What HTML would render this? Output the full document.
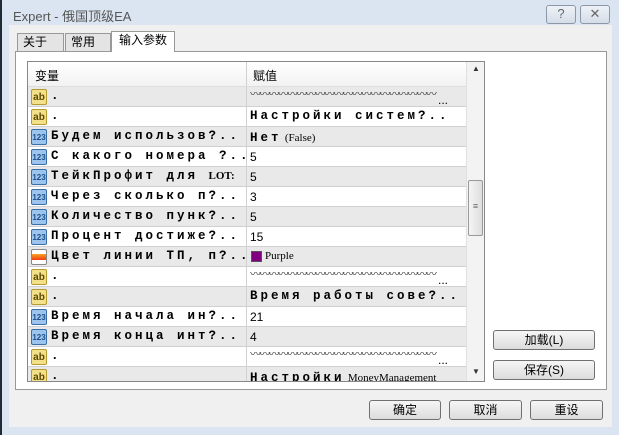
<!DOCTYPE html>
<html><head><meta charset="utf-8"><style>
*{margin:0;padding:0;box-sizing:border-box}
body{width:619px;height:435px;position:relative;overflow:hidden;background:#dbe5f1;font-family:"Liberation Sans","Noto Sans CJK SC",sans-serif;font-size:12px}
.abs{position:absolute}
.strip{left:0;top:0;width:2px;height:435px;background:#1e2a35}
.title{left:13px;top:6px;color:#555;font-size:13px}
.tb{top:5px;width:30px;height:19px;border:1px solid #8a98a8;border-radius:3px;background:linear-gradient(#eef2f7,#d5dde8);text-align:center;color:#666;font-size:13px;line-height:16px}
.client{left:9px;top:25px;width:603px;height:402px;background:#f0f0f0}
.tab{top:33px;height:18px;border:1px solid #999;border-bottom:none;background:#e4e4e4;padding-left:5px;font-size:12px;line-height:17px}
.panel{left:15px;top:51px;width:592px;height:339px;border:1px solid #999;background:#fff}
.table{left:27px;top:61px;width:458px;height:321px;border:1px solid #888;background:#fff;overflow:hidden}
.hdr{position:absolute;left:0;top:0;width:438px;height:25px;background:linear-gradient(#fff,#f2f2f2);border-bottom:1px solid #ddd}
.row{position:absolute;left:0;width:438px;height:20px;border-bottom:1px solid #d0d0d0}
.g{background:#e9e9e9}
.w{background:#fff}
.nm{position:absolute;left:23px;top:2px;font-family:"Liberation Mono",monospace;font-size:12.5px;font-weight:bold;letter-spacing:3px;white-space:nowrap}
.vl{position:absolute;left:222px;top:3px;font-size:12px;white-space:nowrap}
.vb{font-family:"Liberation Mono",monospace;font-size:12.5px;top:2px;font-weight:bold;letter-spacing:3px}
.sm{font-family:"Liberation Serif",serif;font-size:11px}
.sep{position:absolute;left:218px;top:0;width:1px;height:100%;background:#d0d0d0}
.ic{position:absolute;left:3px;top:2px;width:16px;height:16px;border-radius:2px;font-size:8px;font-weight:bold;text-align:center;line-height:15px}
.ab{background:#f3e08a;border:1px solid #b59b2e;color:#5a4a00;font-size:10px}
.n{background:#9cc4ec;border:1px solid #3b6fa8;color:#1d4f8a}
.c{background:linear-gradient(#fff 30%,#f7a020 30%,#f04010 70%,#fff 70%);border:1px solid #888}
.wave{position:absolute;left:222px;top:0;font-size:9px;color:#333;letter-spacing:-1.6px;transform:scaleX(1.25);transform-origin:left}
.scroll{position:absolute;left:438px;top:0;width:18px;height:319px;background:#f3f3f3;border-left:1px solid #e0e0e0}
.btn{height:20px;border:1px solid #707070;border-radius:3px;background:linear-gradient(#f6f6f6,#dcdcdc);text-align:center;font-size:12px;line-height:18px}
</style></head><body>
<div class="abs strip"></div>
<div class="abs title">Expert - 俄国顶级EA</div>
<div class="abs tb" style="left:546px">?</div>
<div class="abs tb" style="left:580px">✕</div>
<div class="abs client"></div>
<div class="abs tab" style="left:17px;width:47px">关于</div>
<div class="abs tab" style="left:65px;width:46px">常用</div>
<div class="abs panel"></div>
<div class="abs tab" style="left:111px;top:31px;width:64px;height:21px;background:#fff;z-index:2;padding-left:7px">输入参数</div>
<div class="abs table">
<div class="hdr"><span style="position:absolute;left:7px;top:5px">变量</span><div class="sep"></div><span style="position:absolute;left:225px;top:5px">赋值</span></div>
<div class="row g" style="top:25px"><div class="ic ab">ab</div><span class="nm">.</span><div class="sep"></div><span class="wave">〰〰〰〰〰〰〰〰〰〰〰〰〰〰〰〰〰〰〰〰</span><span class="vl" style="left:410px;top:6px">...</span></div>
<div class="row w" style="top:45px"><div class="ic ab">ab</div><span class="nm">.</span><div class="sep"></div><span class="vl vb">Настройки систем?..</span></div>
<div class="row g" style="top:65px"><div class="ic n">123</div><span class="nm">Будем использов?..</span><div class="sep"></div><span class="vl"><span class="vb" style="position:static">Нет</span> <span class="sm">(False)</span></span></div>
<div class="row w" style="top:85px"><div class="ic n">123</div><span class="nm">С какого номера ?..</span><div class="sep"></div><span class="vl">5</span></div>
<div class="row g" style="top:105px"><div class="ic n">123</div><span class="nm">ТейкПрофит для <span class="sm" style="letter-spacing:0">LOT:</span></span><div class="sep"></div><span class="vl">5</span></div>
<div class="row w" style="top:125px"><div class="ic n">123</div><span class="nm">Через сколько п?..</span><div class="sep"></div><span class="vl">3</span></div>
<div class="row g" style="top:145px"><div class="ic n">123</div><span class="nm">Количество пунк?..</span><div class="sep"></div><span class="vl">5</span></div>
<div class="row w" style="top:165px"><div class="ic n">123</div><span class="nm">Процент достиже?..</span><div class="sep"></div><span class="vl">15</span></div>
<div class="row g" style="top:185px"><div class="ic c"></div><span class="nm">Цвет линии ТП, п?..</span><div class="sep"></div><span style="position:absolute;left:223px;top:4px;width:11px;height:11px;background:#800080;border:1px solid #555"></span><span class="vl sm" style="left:237px">Purple</span></div>
<div class="row w" style="top:205px"><div class="ic ab">ab</div><span class="nm">.</span><div class="sep"></div><span class="wave">〰〰〰〰〰〰〰〰〰〰〰〰〰〰〰〰〰〰〰〰</span><span class="vl" style="left:410px;top:6px">...</span></div>
<div class="row g" style="top:225px"><div class="ic ab">ab</div><span class="nm">.</span><div class="sep"></div><span class="vl vb">Время работы сове?..</span></div>
<div class="row w" style="top:245px"><div class="ic n">123</div><span class="nm">Время начала ин?..</span><div class="sep"></div><span class="vl">21</span></div>
<div class="row g" style="top:265px"><div class="ic n">123</div><span class="nm">Время конца инт?..</span><div class="sep"></div><span class="vl">4</span></div>
<div class="row w" style="top:285px"><div class="ic ab">ab</div><span class="nm">.</span><div class="sep"></div><span class="wave">〰〰〰〰〰〰〰〰〰〰〰〰〰〰〰〰〰〰〰〰</span><span class="vl" style="left:410px;top:6px">...</span></div>
<div class="row g" style="top:305px"><div class="ic ab">ab</div><span class="nm">.</span><div class="sep"></div><span class="vl"><span class="vb" style="position:static">Настройки</span> <span class="sm">MoneyManagement</span></span></div>
<div class="scroll"><span style="position:absolute;left:5px;top:2px;font-size:8px;color:#333">▲</span><div style="position:absolute;left:1px;top:118px;width:15px;height:56px;border:1px solid #999;border-radius:2px;background:linear-gradient(90deg,#f4f4f4,#dedede);text-align:center;line-height:50px;color:#666;font-size:9px">≡</div><span style="position:absolute;left:5px;top:305px;font-size:8px;color:#333">▼</span></div>
</div>
<div class="abs btn" style="left:493px;top:330px;width:102px">加载(L)</div>
<div class="abs btn" style="left:493px;top:360px;width:102px">保存(S)</div>
<div class="abs btn" style="left:369px;top:400px;width:72px">确定</div>
<div class="abs btn" style="left:449px;top:400px;width:73px">取消</div>
<div class="abs btn" style="left:530px;top:400px;width:73px">重设</div>
</body></html>
